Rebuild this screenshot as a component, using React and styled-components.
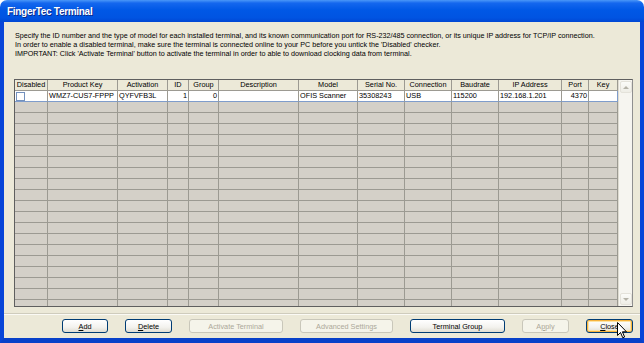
import React from 'react';
import styled, { createGlobalStyle } from 'styled-components';

const GlobalStyle = createGlobalStyle`
	html, body {
		margin: 0;
		padding: 0;
		background: #ffffff;
		overflow: hidden;
	}
	body {
		font-family: 'Liberation Sans', Arial, sans-serif;
	}
`;

const COLS = [33, 70, 50, 21, 30, 80, 59, 47, 47, 47, 63, 27, 29];
const TEMPLATE = COLS.map((w) => `${w}px`).join(' ');

const HEADERS = [
	'Disabled',
	'Product Key',
	'Activation',
	'ID',
	'Group',
	'Description',
	'Model',
	'Serial No.',
	'Connection',
	'Baudrate',
	'IP Address',
	'Port',
	'Key',
];

const DATA = [
	{ check: true },
	{ text: 'WMZ7-CUS7-FPPP' },
	{ text: 'QYFVFB3L' },
	{ text: '1', right: true },
	{ text: '0', right: true },
	{ text: '' },
	{ text: 'OFIS Scanner' },
	{ text: '35308243' },
	{ text: 'USB' },
	{ text: '115200' },
	{ text: '192.168.1.201' },
	{ text: '4370', right: true },
	{ text: '' },
];

const Window = styled.div`
	width: 644px;
	height: 343px;
	display: flex;
	flex-direction: column;
`;

const TitleBar = styled.div`
	height: 22px;
	flex: none;
	display: flex;
	align-items: center;
	padding-left: 7px;
	border-radius: 7px 7px 0 0;
	background: linear-gradient(
		#4a97f8 0%,
		#1467ee 14%,
		#0058e6 45%,
		#0054e2 80%,
		#0047d4 100%
	);
`;

const TitleText = styled.span`
	color: #ffffff;
	font-family: 'Liberation Sans', Arial, sans-serif;
	font-weight: bold;
	font-size: 10px;
	text-shadow: 1px 1px 0 #0b2b8a;
	letter-spacing: -0.3px;
	margin-top: 1px;
`;

const Body = styled.div`
	flex: 1;
	display: flex;
	flex-direction: column;
	background: #ece9d8;
	border-left: 4px solid #0845d8;
	border-right: 4px solid #0845d8;
	border-bottom: 5px solid #0841c9;
`;

const Content = styled.div`
	padding: 9px 7px 0 10px;
`;

const Instructions = styled.div`
	font-size: 7.2px;
	line-height: 9px;
	color: #000000;
	padding-left: 1px;
	white-space: nowrap;
`;

const Grid = styled.div`
	margin-top: 21px;
	height: 228px;
	box-sizing: border-box;
	border: 1px solid #5f5f5f;
	border-right-color: #8f8f8f;
	display: flex;
	background: #d4d0c8;
	overflow: hidden;
`;

const Rows = styled.div`
	width: 603px;
	flex: none;
	overflow: hidden;
`;

const Row = styled.div`
	display: grid;
	grid-template-columns: ${TEMPLATE};
	height: 11px;
`;

const Cell = styled.div`
	box-sizing: border-box;
	height: 11px;
	border-right: 1px solid ${(p) => p.$edge || '#9c9a92'};
	border-bottom: 1px solid ${(p) => p.$bottom || '#9c9a92'};
	background: ${(p) => p.$bg || '#d4d0c8'};
	font-size: 7.3px;
	line-height: 10px;
	color: #000000;
	padding: 0 1px;
	white-space: nowrap;
	overflow: hidden;
	display: flex;
	align-items: center;
	justify-content: ${(p) => (p.$center ? 'center' : p.$right ? 'flex-end' : 'flex-start')};
`;

const CheckBox = styled.span`
	display: block;
	width: 9px;
	height: 9px;
	box-sizing: border-box;
	border: 1px solid #7391bd;
	background: #ffffff;
`;

const ScrollBar = styled.div`
	width: 14px;
	flex: none;
	display: flex;
	flex-direction: column;
	background: #f6f5f0;
	border-left: 1px solid #dedbd0;
`;

const ScrollButton = styled.div`
	height: 12px;
	margin: 1px 1px;
	box-sizing: border-box;
	border: 1px solid #e4e2da;
	border-radius: 2px;
	background: linear-gradient(#fbfbf8, #eeede6);
	display: flex;
	align-items: center;
	justify-content: center;
`;

const Track = styled.div`
	flex: 1;
`;

const Arrow = styled.span`
	width: 0;
	height: 0;
	border-left: 3px solid transparent;
	border-right: 3px solid transparent;
	${(p) => (p.$down ? 'border-top: 3px solid #b5b3a8;' : 'border-bottom: 3px solid #b5b3a8;')}
`;

const Footer = styled.div`
	margin-top: 6px;
	border-top: 1px solid #cfccbd;
	box-shadow: inset 0 1px 0 #fbfaf5;
	padding: 5px 0 0 58px;
	display: flex;
	gap: 17px;
	position: relative;
`;

const Button = styled.div`
	width: ${(p) => p.$w}px;
	height: 14px;
	box-sizing: border-box;
	border: 1px solid ${(p) => (p.$disabled ? '#c9c7ba' : '#003c74')};
	border-radius: 3px;
	background: ${(p) =>
		p.$disabled ? '#f5f4ea' : 'linear-gradient(#ffffff 0%, #f3f2ee 60%, #e0ddd3 100%)'};
	box-shadow: ${(p) => (p.$focus ? 'inset 0 0 0 1px #f6b33d, inset 0 0 0 2px #fde4a6' : 'none')};
	color: ${(p) => (p.$disabled ? '#aca899' : '#000000')};
	font-size: 7.3px;
	display: flex;
	align-items: center;
	justify-content: center;
	flex: none;
	u {
		text-decoration: underline;
	}
`;

const Cursor = styled.svg`
	position: absolute;
	left: 613px;
	top: 8px;
`;

const App = () => {
	const gray = Array.from({ length: 20 });
	return (
		<>
			<GlobalStyle />
			<Window>
				<TitleBar>
					<TitleText>FingerTec Terminal</TitleText>
				</TitleBar>
				<Body>
					<Content>
						<Instructions>
							<div>
								Specify the ID number and the type of model for each installed terminal, and its known communication port for RS-232/485 connection, or its unique IP address for TCP/IP connection.
							</div>
							<div>
								In order to enable a disabled terminal, make sure the terminal is connected online to your PC before you untick the 'Disabled' checker.
							</div>
							<div>
								IMPORTANT: Click 'Activate Terminal' button to activate the terminal in order to able to download clocking data from terminal.
							</div>
						</Instructions>
						<Grid>
							<Rows>
								<Row>
									{HEADERS.map((h) => (
										<Cell key={h} $center $bg='#ece9d8'>
											{h}
										</Cell>
									))}
								</Row>
								<Row>
									{DATA.map((d, i) => (
										<Cell
											key={i}
											$bg='#ffffff'
											$right={d.right}
											$bottom='#7f9ccb'
											$edge={i === DATA.length - 1 ? '#7f9ccb' : undefined}>
											{d.check ? <CheckBox /> : d.text}
										</Cell>
									))}
								</Row>
								{gray.map((_, r) => (
									<Row key={r}>
										{COLS.map((_, c) => (
											<Cell key={c} />
										))}
									</Row>
								))}
							</Rows>
							<ScrollBar>
								<ScrollButton>
									<Arrow />
								</ScrollButton>
								<Track />
								<ScrollButton>
									<Arrow $down />
								</ScrollButton>
							</ScrollBar>
						</Grid>
					</Content>
					<Footer>
						<Button $w={46}>
							<span>
								<u>A</u>dd
							</span>
						</Button>
						<Button $w={47}>
							<span>
								<u>D</u>elete
							</span>
						</Button>
						<Button $w={94} $disabled>
							Activate Terminal
						</Button>
						<Button $w={93} $disabled>
							Advanced Settings
						</Button>
						<Button $w={95}>Terminal Group</Button>
						<Button $w={47} $disabled>
							<span>
								A<u>p</u>ply
							</span>
						</Button>
						<Button $w={47} $focus>
							<span>
								<u>C</u>lose
							</span>
						</Button>
						<Cursor width='12' height='18' viewBox='0 0 12 18'>
							<path
								d='M0.5 0.5 L0.5 13.5 L3.5 10.5 L5.8 15.8 L7.6 15 L5.4 9.8 L9.5 9.8 Z'
								fill='#ffffff'
								stroke='#000000'
								strokeWidth='1'
							/>
						</Cursor>
					</Footer>
				</Body>
			</Window>
		</>
	);
};

export default App;
